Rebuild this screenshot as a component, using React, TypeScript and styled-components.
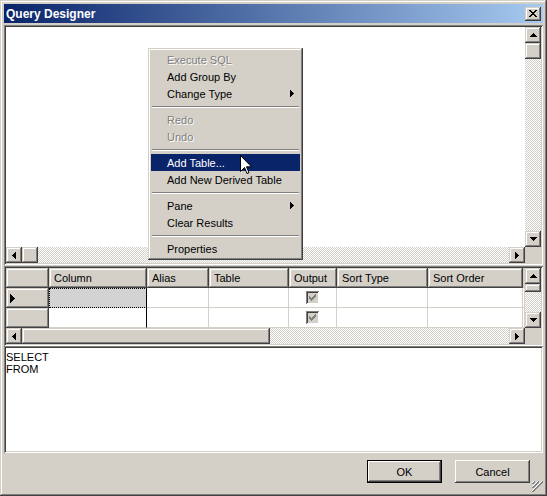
import React from 'react';
import styled, { createGlobalStyle, css } from 'styled-components';

const face = '#d4d0c8';
const shadow = '#808080';
const dark = '#404040';

const GlobalStyle = createGlobalStyle`
  html, body {
    margin: 0;
    padding: 0;
    background: ${face};
  }
  body {
    font-family: "Liberation Sans", Arial, sans-serif;
    font-size: 11px;
    color: #000;
  }
  * {
    box-sizing: border-box;
  }
`;

const raised = css`
  background: ${face};
  box-shadow: inset -1px -1px ${dark}, inset 1px 1px ${face}, inset -2px -2px ${shadow}, inset 2px 2px #fff;
`;

const sunken = css`
  box-shadow: inset 1px 1px ${shadow}, inset -1px -1px #fff, inset 2px 2px ${dark}, inset -2px -2px ${face};
`;

const checker = css`
  background: repeating-conic-gradient(#fff 0 25%, ${face} 0 50%) 0 0 / 2px 2px;
`;

const Window = styled.div`
  position: relative;
  width: 547px;
  height: 496px;
  padding: 4px;
  display: flex;
  flex-direction: column;
  background: ${face};
  box-shadow: inset -1px -1px ${dark}, inset 1px 1px ${face}, inset -2px -2px ${shadow}, inset 2px 2px #fff;
`;

const TitleBar = styled.div`
  height: 19px;
  flex: none;
  display: flex;
  align-items: center;
  justify-content: space-between;
  padding: 0 2px;
  background: linear-gradient(to right, #0a246a, #a6caf0);
`;

const Title = styled.span`
  color: #fff;
  font-weight: bold;
  font-size: 12px;
`;

const CloseButton = styled.div`
  width: 16px;
  height: 14px;
  display: flex;
  align-items: center;
  justify-content: center;
  ${raised};
`;

const Pane = styled.div<{ $height: number; $top?: number }>`
  flex: none;
  height: ${(p) => p.$height}px;
  margin-top: ${(p) => p.$top ?? 0}px;
  padding: 2px;
  display: flex;
  flex-direction: column;
  background: ${face};
  ${sunken};
`;

const PaneRow = styled.div`
  flex: 1;
  display: flex;
  min-height: 0;
`;

const Canvas = styled.div`
  flex: 1;
  background: #fff;
`;

const VScroll = styled.div`
  width: 16px;
  flex: none;
  display: flex;
  flex-direction: column;
  ${checker};
`;

const HScroll = styled.div`
  height: 16px;
  flex: none;
  display: flex;
`;

const HTrack = styled.div`
  flex: 1;
  display: flex;
  ${checker};
`;

const VTrack = styled.div`
  flex: 1;
  ${checker};
`;

const ScrollButton = styled.div<{ $h?: number }>`
  width: 16px;
  height: ${(p) => p.$h ?? 16}px;
  flex: none;
  display: flex;
  align-items: center;
  justify-content: center;
  ${raised};
`;

const Thumb = styled.div<{ $w?: number; $h?: number }>`
  flex: none;
  width: ${(p) => (p.$w ? `${p.$w}px` : '16px')};
  height: ${(p) => (p.$h ? `${p.$h}px` : '16px')};
  ${raised};
`;

const Corner = styled.div`
  width: 16px;
  flex: none;
  background: ${face};
`;

const Table = styled.div`
  flex: 1;
  display: grid;
  grid-template-columns: 43px 98px 62px 80px 48px 91px 95px 1fr;
  grid-auto-rows: 20px;
  background: #fff;
  align-content: start;
`;

const HeaderCell = styled.div`
  display: flex;
  align-items: center;
  padding: 0 5px;
  white-space: nowrap;
  ${raised};
`;

const Filler = styled.div`
  background: ${face};
`;

const RowHeader = styled.div`
  display: flex;
  align-items: center;
  padding-left: 4px;
  ${raised};
`;

const Cell = styled.div<{ $selected?: boolean; $divider?: boolean }>`
  display: flex;
  align-items: center;
  justify-content: center;
  border-right: 1px solid ${(p) => (p.$divider ? '#000' : face)};
  border-bottom: 1px solid ${face};
  background: ${(p) => (p.$selected ? '#d3d3d3' : '#fff')};
  ${(p) =>
    p.$selected &&
    css`
      outline: 1px dotted #000;
      outline-offset: -1px;
    `}
`;

const Check = styled.div`
  width: 13px;
  height: 13px;
  display: flex;
  align-items: center;
  justify-content: center;
  background: ${face};
  ${sunken};
`;

const SqlText = styled.div`
  flex: 1;
  background: #fff;
  padding: 3px 0 0 0;
  line-height: 12px;
  white-space: pre;
`;

const Footer = styled.div`
  flex: 1;
  position: relative;
  display: flex;
  justify-content: flex-end;
  align-items: flex-start;
  gap: 13px;
  padding: 7px 13px 0 0;
`;

const Button = styled.div<{ $default?: boolean }>`
  width: 75px;
  height: 23px;
  display: flex;
  align-items: center;
  justify-content: center;
  background: ${face};
  box-shadow: ${(p) =>
    p.$default
      ? `inset 0 0 0 1px #000, inset -2px -2px ${dark}, inset 2px 2px #fff, inset -3px -3px ${shadow}`
      : `inset -1px -1px ${dark}, inset 1px 1px #fff, inset -2px -2px ${shadow}, inset 2px 2px ${face}`};
`;

const Grip = styled.svg`
  position: absolute;
  right: 0;
  bottom: 0;
`;

const Menu = styled.div`
  position: absolute;
  left: 148px;
  top: 48px;
  width: 155px;
  padding: 3px;
  background: ${face};
  box-shadow: inset -1px -1px ${dark}, inset 1px 1px ${face}, inset -2px -2px ${shadow}, inset 2px 2px #fff;
`;

const MenuItem = styled.div<{ $disabled?: boolean; $active?: boolean }>`
  height: 17px;
  display: flex;
  align-items: center;
  justify-content: space-between;
  padding: 0 6px 0 16px;
  white-space: nowrap;
  color: ${(p) => (p.$active ? '#fff' : p.$disabled ? shadow : '#000')};
  background: ${(p) => (p.$active ? '#0a246a' : 'transparent')};
  text-shadow: ${(p) => (p.$disabled ? '1px 1px #fff' : 'none')};
`;

const Separator = styled.div`
  height: 9px;
  padding: 0 1px;
  display: flex;
  flex-direction: column;
  justify-content: center;
  &::before {
    content: '';
    display: block;
    border-top: 1px solid ${shadow};
    border-bottom: 1px solid #fff;
  }
`;

const Cursor = styled.svg`
  position: absolute;
  left: 240px;
  top: 155px;
`;

type Dir = 'up' | 'down' | 'left' | 'right';

function Arrow({ dir }: { dir: Dir }) {
  const rows = [1, 3, 5, 7];
  const vertical = dir === 'up' || dir === 'down';
  const rects = rows.map((w, i) => {
    const step = dir === 'up' || dir === 'left' ? i : 3 - i;
    const off = (7 - w) / 2;
    return vertical ? (
      <rect key={i} x={off} y={step} width={w} height={1} />
    ) : (
      <rect key={i} x={step} y={off} width={1} height={w} />
    );
  });
  return (
    <svg width={vertical ? 7 : 4} height={vertical ? 4 : 7} shapeRendering="crispEdges" fill="#000">
      {rects}
    </svg>
  );
}

function SubArrow() {
  return (
    <svg width={4} height={7} shapeRendering="crispEdges" fill="currentColor">
      <rect x={0} y={0} width={1} height={7} />
      <rect x={1} y={1} width={1} height={5} />
      <rect x={2} y={2} width={1} height={3} />
      <rect x={3} y={3} width={1} height={1} />
    </svg>
  );
}

function RowMarker() {
  return (
    <svg width={5} height={9} shapeRendering="crispEdges" fill="#000">
      <rect x={0} y={0} width={1} height={9} />
      <rect x={1} y={1} width={1} height={7} />
      <rect x={2} y={2} width={1} height={5} />
      <rect x={3} y={3} width={1} height={3} />
      <rect x={4} y={4} width={1} height={1} />
    </svg>
  );
}

function CheckMark() {
  return (
    <svg width={7} height={7} viewBox="0 0 7 7" shapeRendering="crispEdges" fill={shadow}>
      <rect x={0} y={2} width={1} height={3} />
      <rect x={1} y={3} width={1} height={3} />
      <rect x={2} y={4} width={1} height={3} />
      <rect x={3} y={3} width={1} height={3} />
      <rect x={4} y={2} width={1} height={3} />
      <rect x={5} y={1} width={1} height={3} />
      <rect x={6} y={0} width={1} height={3} />
    </svg>
  );
}

const columns = ['Column', 'Alias', 'Table', 'Output', 'Sort Type', 'Sort Order'];

function GridRow({ current }: { current?: boolean }) {
  return (
    <>
      <RowHeader>{current && <RowMarker />}</RowHeader>
      <Cell $selected={current} $divider />
      <Cell />
      <Cell />
      <Cell>
        <Check>
          <CheckMark />
        </Check>
      </Cell>
      <Cell />
      <Cell />
      <Cell />
    </>
  );
}

export default function App() {
  return (
    <>
      <GlobalStyle />
      <Window>
        <TitleBar>
          <Title>Query Designer</Title>
          <CloseButton>
            <svg width={8} height={7} shapeRendering="crispEdges" stroke="#000" strokeWidth={1}>
              <path d="M0 0.5h2M6 0.5h2M1 1.5h2M5 1.5h2M2 2.5h4M3 3.5h2M2 4.5h4M1 5.5h2M5 5.5h2M0 6.5h2M6 6.5h2" />
            </svg>
          </CloseButton>
        </TitleBar>

        <Pane $height={240} $top={2}>
          <PaneRow>
            <Canvas />
            <VScroll>
              <ScrollButton>
                <Arrow dir="up" />
              </ScrollButton>
              <Thumb />
              <VTrack />
              <ScrollButton>
                <Arrow dir="down" />
              </ScrollButton>
            </VScroll>
          </PaneRow>
          <HScroll>
            <ScrollButton>
              <Arrow dir="left" />
            </ScrollButton>
            <HTrack>
              <Thumb />
            </HTrack>
            <ScrollButton>
              <Arrow dir="right" />
            </ScrollButton>
            <Corner />
          </HScroll>
        </Pane>

        <Pane $height={80} $top={1}>
          <PaneRow>
            <Table>
              <HeaderCell />
              {columns.map((c) => (
                <HeaderCell key={c}>{c}</HeaderCell>
              ))}
              <Filler />
              <GridRow current />
              <GridRow />
            </Table>
            <VScroll>
              <ScrollButton>
                <Arrow dir="up" />
              </ScrollButton>
              <Thumb $h={8} />
              <VTrack />
              <ScrollButton>
                <Arrow dir="down" />
              </ScrollButton>
            </VScroll>
          </PaneRow>
          <HScroll>
            <ScrollButton>
              <Arrow dir="left" />
            </ScrollButton>
            <HTrack>
              <Thumb $w={248} />
            </HTrack>
            <ScrollButton>
              <Arrow dir="right" />
            </ScrollButton>
            <Corner />
          </HScroll>
        </Pane>

        <Pane $height={107}>
          <SqlText>{'SELECT\nFROM'}</SqlText>
        </Pane>

        <Footer>
          <Button $default>OK</Button>
          <Button>Cancel</Button>
          <Grip width={12} height={12} shapeRendering="crispEdges">
            {[0, 4, 8].map((o) => (
              <g key={o}>
                <path d={`M${11 - o} 1 L1 ${11 - o}`} stroke="#fff" fill="none" />
                <path d={`M${12 - o} 1 L1 ${12 - o}`} stroke={shadow} fill="none" />
                <path d={`M${12 - o} 2 L2 ${12 - o}`} stroke={shadow} fill="none" />
              </g>
            ))}
          </Grip>
        </Footer>

        <Menu>
          <MenuItem $disabled>Execute SQL</MenuItem>
          <MenuItem>Add Group By</MenuItem>
          <MenuItem>
            Change Type
            <SubArrow />
          </MenuItem>
          <Separator />
          <MenuItem $disabled>Redo</MenuItem>
          <MenuItem $disabled>Undo</MenuItem>
          <Separator />
          <MenuItem $active>Add Table...</MenuItem>
          <MenuItem>Add New Derived Table</MenuItem>
          <Separator />
          <MenuItem>
            Pane
            <SubArrow />
          </MenuItem>
          <MenuItem>Clear Results</MenuItem>
          <Separator />
          <MenuItem>Properties</MenuItem>
        </Menu>

        <Cursor width={12} height={20} viewBox="0 0 12 20">
          <path
            d="M0.5 0.5 L0.5 16.5 L4.5 12.5 L7 18.5 L9 17.7 L6.5 11.8 L11.5 11.8 Z"
            fill="#fff"
            stroke="#000"
            strokeWidth={1}
            strokeLinejoin="miter"
          />
        </Cursor>
      </Window>
    </>
  );
}
